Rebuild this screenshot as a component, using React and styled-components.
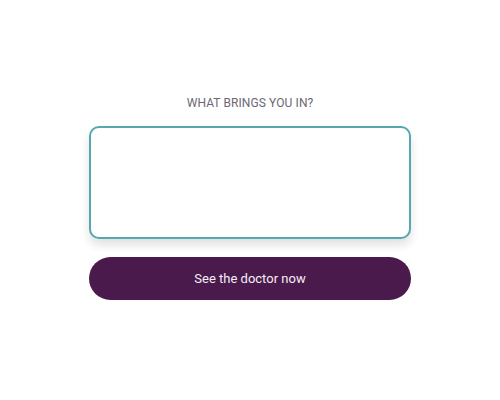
import React from "react";
import styled, { createGlobalStyle } from "styled-components";

const Global = createGlobalStyle`
  html, body { margin: 0; padding: 0; background: #ffffff; }
  body { font-family: Roboto, "Liberation Sans", sans-serif; }
`;

const Page = styled.div`
  width: 500px;
  height: 400px;
  display: flex;
  justify-content: center;
  box-sizing: border-box;
  padding-top: 96px;
`;

const Form = styled.form`
  width: 322px;
  display: flex;
  flex-direction: column;
  align-items: stretch;
`;

const Label = styled.label`
  text-align: center;
  font-size: 12px;
  line-height: 14px;
  color: #6d6772;
  letter-spacing: 0.1px;
  margin-bottom: 16px;
`;

const Area = styled.textarea`
  display: block;
  box-sizing: border-box;
  width: 100%;
  height: 113px;
  border: 2px solid #56a8b0;
  border-radius: 10px;
  resize: none;
  outline: none;
  background: #fff;
  box-shadow: 0 6px 10px rgba(0, 0, 0, 0.12);
  font-family: inherit;
  font-size: 14px;
  padding: 10px 12px;
  margin: 0;
`;

const Button = styled.button`
  margin-top: 18px;
  height: 43px;
  border: none;
  border-radius: 22px;
  background: #4b1a4c;
  color: #f6eef6;
  font-family: inherit;
  font-size: 13px;
  cursor: pointer;
`;

export default function App() {
  return (
    <>
      <Global />
      <Page>
        <Form onSubmit={(e) => e.preventDefault()}>
          <Label htmlFor="reason">WHAT BRINGS YOU IN?</Label>
          <Area id="reason" />
          <Button type="submit">See the doctor now</Button>
        </Form>
      </Page>
    </>
  );
}
